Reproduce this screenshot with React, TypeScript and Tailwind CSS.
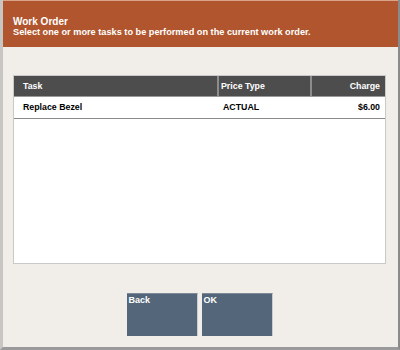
import React from 'react';

const rows = [{ task: 'Replace Bezel', priceType: 'ACTUAL', charge: '$6.00' }];

const App: React.FC = () => {
  return (
    <div
      className="w-[400px] h-[350px] flex flex-col bg-[#f1eee9] border-l-[3px] border-l-[#c8c6c3] border-r-2 border-r-[#8a8a8a] border-b-[3px] border-b-[#9a9a9a] overflow-hidden"
      style={{ fontFamily: '"Liberation Sans", Arial, sans-serif' }}
    >
      <div className="h-[47px] shrink-0 bg-[#b0552d] border-t border-t-[#d9a38a] pl-[10px] pt-[15px] text-white font-bold">
        <div className="text-[10px] leading-[11px]">Work Order</div>
        <div className="text-[9.2px] leading-[10px]">Select one or more tasks to be performed on the current work order.</div>
      </div>

      <div className="flex-1 flex flex-col px-[10px] pt-[28px]">
        <div className="w-[373px] h-[189px] bg-white border border-[#c9c9c9] flex flex-col">
          <div className="h-[20px] flex bg-[#4d4d4d] text-white font-bold text-[8.8px] leading-[20px]">
            <div className="w-[205px] pl-[9px] border-r-2 border-r-[#8c8c8c]">Task</div>
            <div className="w-[93px] pl-[2px] border-r-2 border-r-[#8c8c8c]">Price Type</div>
            <div className="flex-1 text-right pr-[5px]">Charge</div>
          </div>
          <div className="h-px bg-[#9a9a9a]" />
          {rows.map((r) => (
            <div key={r.task} className="h-[22px] flex border-b border-b-[#8a8a8a] text-black font-bold text-[8.8px] leading-[21px]">
              <div className="w-[205px] pl-[9px]">{r.task}</div>
              <div className="w-[93px] pl-[4px]">{r.priceType}</div>
              <div className="flex-1 text-right pr-[5px]">{r.charge}</div>
            </div>
          ))}
        </div>

        <div className="flex justify-center gap-[4px] mt-[29px] pr-[2px]">
          <button type="button" className="w-[71px] h-[43px] bg-[#546679] border-t border-t-[#7c8a99] border-r border-r-[#c9ccd0] text-white font-bold text-[9px] text-left pl-[2px] pt-[1px] leading-[10px] flex items-start">
            Back
          </button>
          <button type="button" className="w-[71px] h-[43px] bg-[#546679] border-t border-t-[#7c8a99] border-r border-r-[#c9ccd0] text-white font-bold text-[9px] text-left pl-[2px] pt-[1px] leading-[10px] flex items-start">
            OK
          </button>
        </div>
      </div>
    </div>
  );
};

export default App;
